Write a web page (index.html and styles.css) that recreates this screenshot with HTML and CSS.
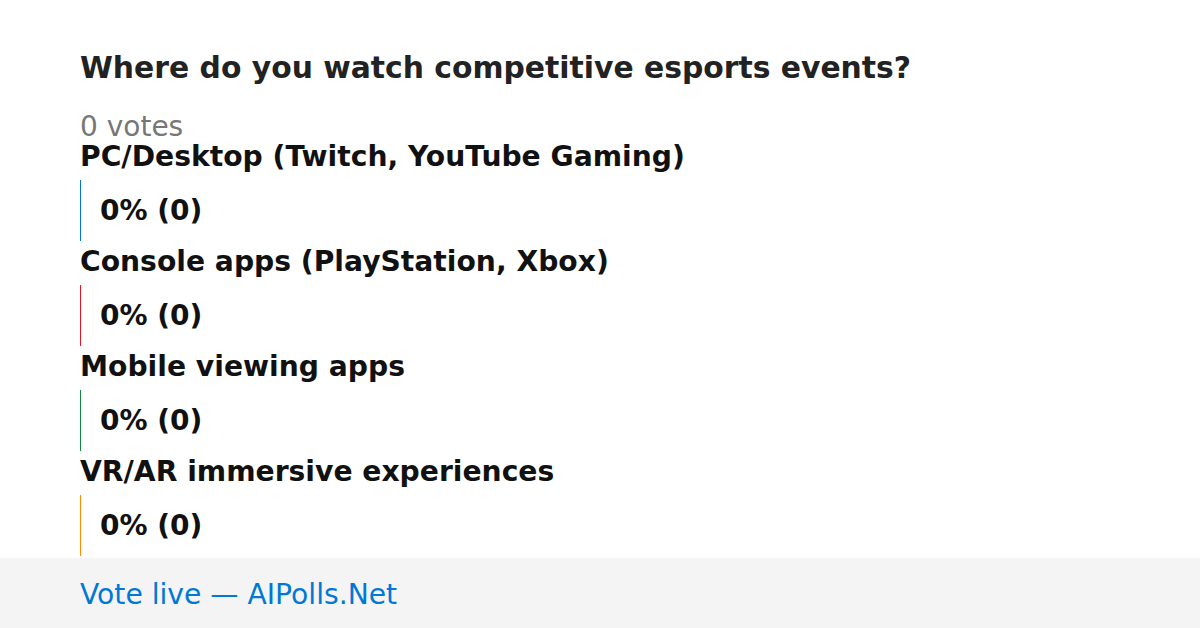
FILE: index.html
```html
<!DOCTYPE html>
<html>
  <head>
    <title>poll</title>
    <link rel="stylesheet" href="styles.css">
  </head>

  <body>
    <div class="poll">
      <h1 class="poll-title">Where do you watch competitive esports events?</h1>
      <div class="votes">0 votes</div>

      <div class="option">
        <div class="option-label">PC/Desktop (Twitch, YouTube Gaming)</div>
        <div class="bar bar-blue">0% (0)</div>
      </div>

      <div class="option">
        <div class="option-label">Console apps (PlayStation, Xbox)</div>
        <div class="bar bar-red">0% (0)</div>
      </div>

      <div class="option">
        <div class="option-label">Mobile viewing apps</div>
        <div class="bar bar-green">0% (0)</div>
      </div>

      <div class="option">
        <div class="option-label">VR/AR immersive experiences</div>
        <div class="bar bar-orange">0% (0)</div>
      </div>
    </div>

    <div class="footer">Vote live — AIPolls.Net</div>
  </body>
</html>
```

FILE: styles.css
```css
/* page */
body {
  margin: 0;
  background-color: #fff;
  font-family: "DejaVu Sans", Verdana, sans-serif;
  width: 1200px;
  height: 628px;
  overflow: hidden;
  display: flex;
  flex-direction: column;
}

.poll {
  padding: 50px 80px 0 80px;
  height: 507px;
  box-sizing: border-box;
}

.poll-title {
  margin: 0;
  font-size: 29.8px;
  line-height: 36px;
  font-weight: bold;
  color: #222;
}

.votes {
  margin-top: 27px;
  font-size: 28px;
  line-height: 28px;
  color: #777;
}

/* options */
.option {
  margin-bottom: 5px;
}

.option-label {
  font-size: 28.2px;
  line-height: 32px;
  font-weight: bold;
  color: #111;
}

.bar {
  margin-top: 7px;
  height: 61px;
  display: flex;
  align-items: center;
  padding-left: 19px;
  border-left: 1px solid #0078d4;
  font-size: 28px;
  font-weight: bold;
  color: #111;
}

.bar-blue {
  border-left-color: #0078d4;
}

.bar-red {
  border-left-color: #e81123;
}

.bar-green {
  border-left-color: #10893e;
}

.bar-orange {
  border-left-color: #ff8c00;
}

/* footer */
.footer {
  margin-top: auto;
  height: 70px;
  box-sizing: border-box;
  padding: 4px 0 0 80px;
  line-height: 66px;
  background-color: #f4f4f4;
  font-size: 28.2px;
  color: #0078d4;
}
```
